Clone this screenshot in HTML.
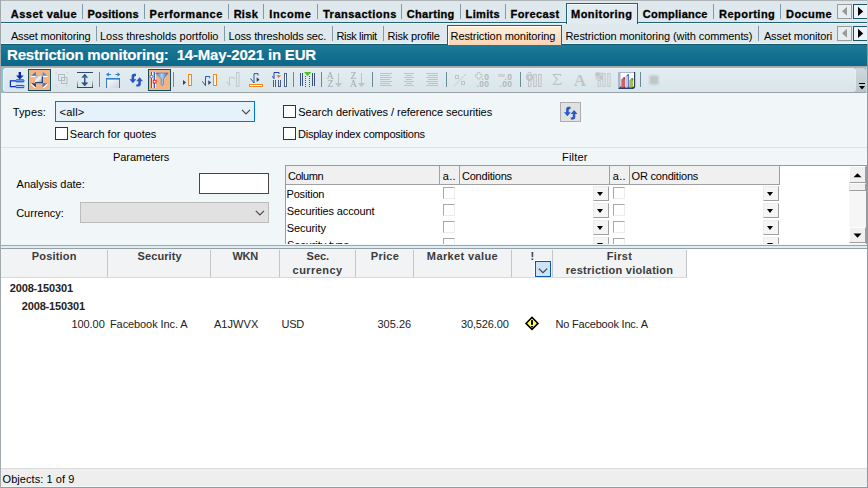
<!DOCTYPE html>
<html><head><meta charset="utf-8"><title>Restriction monitoring</title>
<style>
html,body{margin:0;padding:0;}
body{width:868px;height:488px;overflow:hidden;background:#fff;font-family:"Liberation Sans",sans-serif;}
#app{position:relative;width:868px;height:488px;overflow:hidden;background:#fff;}
#app div,#app span,#app svg{position:absolute;box-sizing:border-box;}
.t{white-space:pre;line-height:1;}
.sep1{width:1px;background:#7f9aa6;top:4px;height:15px;}
.sep2{width:1px;background:#7f9aa6;top:26px;height:15px;}
.cb{width:13px;height:13px;border:1px solid #333;background:#fff;}
.fcb{width:12px;height:12px;border-top:1px solid #a8a8a8;border-left:1px solid #a8a8a8;border-right:1px solid #ececec;border-bottom:1px solid #ececec;background:#fff;}
.dd{width:16px;height:15px;background:#f5f5f5;border-right:1px solid #a0a0a0;border-bottom:1px solid #a0a0a0;border-top:1px solid #ececec;border-left:1px solid #ececec;}
.dd:after{content:"";position:absolute;left:3px;top:5px;border-left:3.5px solid transparent;border-right:3.5px solid transparent;border-top:4px solid #000;}
.gs{width:1px;background:#c3c6c9;top:250px;height:27px;}
.nav{width:15px;height:15px;background:#e6eef2;border:1px solid #9c9c9c;}
.navr{width:16px;background:#eef4f7;border:1px solid #1a5568;}

</style></head>
<body>
<div id="app">
<!-- tab strip backgrounds -->
<div style="left:0;top:0;width:868px;height:44px;background:#dfe9ed"></div>
<div style="left:0;top:22px;width:868px;height:1px;background:#1f6379"></div>
<div style="left:0;top:23px;width:868px;height:1px;background:#f1f6f9"></div>
<!-- title bar -->
<div style="left:0;top:44px;width:868px;height:22px;background:linear-gradient(#217b99,#14708f 50%,#0a6889)"></div>
<div style="left:0;top:44px;width:868px;height:1px;background:#0f5a73"></div>
<!-- active top tab -->
<div style="left:0;top:43px;width:868px;height:1px;background:#f1f6f9"></div>
<div style="left:566px;top:3px;width:72px;height:21px;background:#e2ebf0;border:1px solid #1f6379;border-bottom:none;box-shadow:inset 1px 1px 0 #f4f8fa"></div>
<!-- active sub tab -->
<div style="left:447px;top:25px;width:115px;height:20px;background:linear-gradient(#fdf0dc,#fbd4b2);border:1px solid #1f6379;border-bottom:none;box-shadow:inset 1px 1px 0 #fffaf0"></div>
<!-- top seps -->
<div class="sep1" style="left:82px"></div><div class="sep1" style="left:144px"></div><div class="sep1" style="left:228px"></div>
<div class="sep1" style="left:263px"></div><div class="sep1" style="left:317px"></div><div class="sep1" style="left:401px"></div>
<div class="sep1" style="left:460px"></div><div class="sep1" style="left:505px"></div><div class="sep1" style="left:713px"></div><div class="sep1" style="left:780px"></div>
<div class="sep2" style="left:96px"></div><div class="sep2" style="left:224px"></div><div class="sep2" style="left:332px"></div>
<div class="sep2" style="left:383px"></div><div class="sep2" style="left:758px"></div>
<!-- nav arrows -->
<div class="nav" style="left:837px;top:4px"></div><div class="nav navr" style="left:853px;top:4px"></div>
<div class="nav" style="left:837px;top:26px"></div><div class="nav navr" style="left:853px;top:26px"></div>
<svg style="left:837px;top:4px" width="31" height="15" viewBox="837 4 31 15"><path d="M842 11.300 L847 6.800 L847 15.800Z" fill="#9a9a9a"/><path d="M858 6.800 L863.200 11.400 L858 16Z" fill="#000"/></svg>
<svg style="left:837px;top:26px" width="31" height="15" viewBox="837 4 31 15"><path d="M842 11.300 L847 6.800 L847 15.800Z" fill="#9a9a9a"/><path d="M858 6.800 L863.200 11.400 L858 16Z" fill="#000"/></svg>
<!-- toolbar -->
<div style="left:0;top:66px;width:868px;height:26px;background:#f0f6fa"></div>
<svg style="left:0;top:0" width="868" height="100" viewBox="0 0 868 100">
<defs>
<linearGradient id="gbar" x1="0" y1="0" x2="0" y2="1"><stop offset="0" stop-color="#0f3ccc"/><stop offset=".5" stop-color="#9fd0ff"/><stop offset="1" stop-color="#0f3ccc"/></linearGradient>
<linearGradient id="gsq" x1="0" y1="0" x2="1" y2="1"><stop offset="0" stop-color="#8a93a8"/><stop offset=".5" stop-color="#f2f4f8"/><stop offset="1" stop-color="#9aa3b8"/></linearGradient>
<linearGradient id="gbox" x1="0" y1="0" x2="1" y2="1"><stop offset="0" stop-color="#ffffff"/><stop offset="1" stop-color="#cfd0e2"/></linearGradient>
<linearGradient id="gfun" x1="0" y1="0" x2="1" y2="0"><stop offset="0" stop-color="#3a7ac8"/><stop offset=".5" stop-color="#a8d4f8"/><stop offset="1" stop-color="#2f68b8"/></linearGradient>
<linearGradient id="gfade" x1="0" y1="0" x2="0" y2="1"><stop offset="0" stop-color="#34466b" stop-opacity="0"/><stop offset="1" stop-color="#34466b"/></linearGradient>
<linearGradient id="garr" x1="0" y1="0" x2="0" y2="1"><stop offset="0" stop-color="#2c456f"/><stop offset="1" stop-color="#3f6fa6"/></linearGradient>
<linearGradient id="gtb" x1="0" y1="0" x2="0" y2="1"><stop offset="0" stop-color="#e3edf1"/><stop offset="1" stop-color="#d9e5ea"/></linearGradient>
<linearGradient id="gov" x1="0" y1="0" x2="0" y2="1"><stop offset="0" stop-color="#cdd7dc"/><stop offset="1" stop-color="#bcc7cc"/></linearGradient>
<filter id="blur"><feGaussianBlur stdDeviation="0.9"/></filter>
</defs>
<!-- toolbar background -->
<rect x="0" y="66" width="868" height="1" fill="#a3a8ab"/>
<rect x="1" y="67" width="866" height="26" fill="#8fc0d0"/>
<rect x="5" y="92" width="862" height="1" fill="#9aa2a6"/>
<path d="M3 71 Q3 68 6 68 L852 68 Q856 68 856 70 L856 89 Q856 92 853 92 L5 92 L3 90 Z" fill="#ebf2f6"/>
<path d="M4 72 Q4 69 7 69 L852 69 Q855.500 69 855.500 70 L856 89 Q856 92 853 92 L5 92 L4 90 Z" fill="url(#gtb)"/>
<path d="M856 68 L862 68 Q866 68 866 72 L866 89 Q866 92 863 92 L853 92 Q856 92 856 89Z" fill="url(#gov)"/>
<rect x="866" y="67" width="1" height="26" fill="#c9d6dc"/>
<!-- overflow chevron -->
<rect x="859" y="83" width="6" height="1" fill="#000"/>
<path d="M859 86 L865 86 L862 89.5Z" fill="#000"/>
<!-- separators -->
<g fill="#6d8c9a">
<rect x="99" y="72" width="1" height="15"/><rect x="173" y="72" width="1" height="15"/><rect x="293" y="72" width="1" height="15"/>
<rect x="321" y="72" width="1" height="15"/><rect x="372" y="72" width="1" height="15"/><rect x="446" y="72" width="1" height="15"/>
<rect x="520" y="72" width="1" height="15"/><rect x="640" y="72" width="1" height="15"/>
</g>
<!-- selected buttons -->
<rect x="28.5" y="69.5" width="22" height="21" fill="#f2b486" stroke="#174f5f"/>
<rect x="148.5" y="69.5" width="22" height="21" fill="#f2b486" stroke="#174f5f"/>

<!-- icon1: insert group -->
<g>
<rect x="18.600" y="72" width="2.400" height="4" fill="#0a2aa8"/>
<path d="M16 75.500 L23.600 75.500 L19.800 79.500Z" fill="#0a2aa8"/>
<rect x="15.700" y="79.700" width="8.300" height="2.300" rx=".8" fill="url(#gbar)" stroke="#0f3ccc" stroke-width=".7"/>
<rect x="15.700" y="85.400" width="8.300" height="2.300" rx=".8" fill="url(#gbar)" stroke="#0f3ccc" stroke-width=".7"/>
<path d="M15.700 80.800 L10.400 80.800 L10.400 86.600 L15.700 86.600" fill="none" stroke="#0c2cb8" stroke-width="1.200"/>
</g>
<!-- icon2: expand -->
<g>
<rect x="35.300" y="75.800" width="7.700" height="7.400" fill="#2c4274"/>
<rect x="35" y="75.500" width="6.800" height="6.500" fill="url(#gsq)"/>
<path d="M31 76 L35.800 71.800 L35.800 76Z" fill="#3a78b8"/><rect x="31" y="75.800" width="4.800" height="1.200" fill="#fff"/>
<path d="M47.500 76 L42.700 71.800 L42.700 76Z" fill="#3a9ad8"/><rect x="42.700" y="75.800" width="4.800" height="1.200" fill="#fff"/>
<path d="M31 83.200 L36 83.200 L36 87.800Z" fill="#2c4a84"/><path d="M31 83.200 L36 87.800 L34.800 88.300 L31 84.800Z" fill="#fff"/>
<path d="M47.500 83.200 L42.500 83.200 L42.500 87.800Z" fill="#3a78c8"/><path d="M47.500 83.200 L42.500 87.800 L43.700 88.300 L47.500 84.800Z" fill="#fff"/>
</g>
<!-- icon3: group disabled -->
<g fill="none" stroke="#b4babd" stroke-width="1">
<rect x="58.500" y="74.500" width="6" height="6"/><rect x="61.500" y="77.500" width="5.500" height="6"/>
<path d="M55.500 72 L57 73.500 M66.500 72 L68 73.500 M55.500 85.200 L57 86.700 M66.500 85.200 L68 86.700" stroke="#c8cccf"/>
</g>
<!-- icon4: fit height -->
<g>
<rect x="77" y="72" width="16" height="1" fill="#34466b"/>
<rect x="77" y="87" width="16" height="1" fill="#34466b"/>
<rect x="77" y="80" width="1" height="8" fill="url(#gfade)"/><rect x="92" y="80" width="1" height="8" fill="url(#gfade)"/>
<path d="M84.750 73.800 L88.300 77.800 L81.200 77.800Z" fill="url(#garr)"/>
<rect x="84" y="77.500" width="1.500" height="5.500" fill="#34567f"/>
<path d="M84.750 86.500 L88.300 82.600 L81.200 82.600Z" fill="url(#garr)"/>
</g>
<!-- icon5: fit width -->
<g>
<path d="M106 74.500 L108.800 72.300 L108.800 73.900 L111 73.900 L111 75.100 L108.800 75.100 L108.800 76.700Z" fill="#2f80d8"/>
<path d="M120.300 74.500 L117.500 72.300 L117.500 73.900 L115.300 73.900 L115.300 75.100 L117.500 75.100 L117.500 76.700Z" fill="#2f80d8"/>
<rect x="106.500" y="78.500" width="13" height="9.500" fill="url(#gbox)"/>
<path d="M106.500 88 L106.500 78.500 L119.500 78.500 L119.500 88" fill="none" stroke="#2f7fd0" stroke-width="1"/><rect x="106" y="78" width="14" height="1.600" fill="#2f7fd0"/>
</g>
<!-- icon6: refresh -->
<g fill="#2a55c8">
<path d="M136 73.800 L133.800 73.800 Q131.600 73.800 131.600 76.500 L131.600 79.300 L129.400 79.300 L132.900 83.300 L136.300 79.300 L134.200 79.300 L134.200 77 Q134.200 76 136 76Z"/>
<path d="M136.300 86.600 L138.600 86.600 Q140.800 86.600 140.800 84 L140.800 81.200 L143 81.200 L139.600 77.200 L136.200 81.200 L138.300 81.200 L138.300 83.500 Q138.300 84.500 136.300 84.500Z"/>
</g>
<!-- icon7: filter -->
<g>
<rect x="151" y="72" width="1" height="16" fill="#2f62d6"/><rect x="152" y="72" width="1" height="16" fill="#fff" opacity=".8"/>
<rect x="154" y="72" width="1" height="16" fill="#2f62d6"/><rect x="155" y="72" width="1" height="16" fill="#fff" opacity=".8"/>
<circle cx="151.500" cy="76.600" r="1.400" fill="#fff" stroke="#2f62d6" stroke-width=".9"/>
<rect x="153.200" y="80.200" width="2.800" height="2.800" fill="#fff" stroke="#ee1111" stroke-width=".9"/>
<path d="M155.700 73 L168.200 73 L163.400 78.800 L163.400 84.200 L162.300 85.800 L161.200 84.200 L161.200 78.800Z" fill="url(#gfun)" stroke="#2f70c0" stroke-width=".6"/>
</g>
<!-- icon8 -->
<g>
<path d="M183 80 L186 82.500 L183 85Z" fill="#2c3f6f"/>
<rect x="188.500" y="74.500" width="3" height="11" fill="#f4f6fa" stroke="#f08a1a" stroke-width="1"/>
</g>
<!-- icon9 -->
<g>
<path d="M202.300 81.300 L205.500 85.700 L205.500 76.500 L209.700 76.500 L209.700 78.300" fill="none" stroke="#2a5a9a" stroke-width="1"/>
<path d="M208.300 80.200 L211.200 82.600 L208.300 85Z" fill="#2c3f6f"/>
<rect x="213.500" y="74.500" width="3" height="11" fill="#f4f6fa" stroke="#f08a1a" stroke-width="1"/>
</g>
<!-- icon10 disabled -->
<g fill="none" stroke="#c3c8cb" stroke-width="1">
<path d="M226.400 81.300 L229.500 85.700 L229.500 77.400 L234 77.400 L234 79"/>
<rect x="236.500" y="72.500" width="2.500" height="14"/>
</g>
<!-- icon11 -->
<g>
<path d="M250.600 78.500 L254 83 L254 73.600 L258 73.600 L258 75.500" fill="none" stroke="#2a5a9a" stroke-width="1"/>
<path d="M256.700 77.300 L259.500 79.700 L256.700 82Z" fill="#2c3f6f"/>
<rect x="249.500" y="84.500" width="13" height="2" fill="#fff" stroke="#f08a1a" stroke-width="1"/>
</g>
<!-- icon12 -->
<g>
<path d="M272.300 76.300 L274 78.600 L274 72.500 L279 72.500 L279 74" fill="none" stroke="#1f3fb0" stroke-width="1"/>
<path d="M276.300 75.300 L281 75.300 L278.650 78Z" fill="#e8731a"/>
<g fill="#4a5f8a" shape-rendering="crispEdges"><rect x="273" y="80" width="1" height="7"/><rect x="275" y="80" width="1" height="7"/>
<rect x="278" y="80" width="1" height="7"/><rect x="280" y="80" width="1" height="7"/><rect x="278" y="86" width="3" height="1"/></g>
<rect x="284" y="73" width="3" height="14" fill="#4a5f8a"/><rect x="285" y="74" width="1" height="12" fill="#fff"/>
</g>
<!-- icon13 -->
<g fill="#3a4f7a">
<rect x="300" y="73" width="1" height="13"/><rect x="302" y="73" width="1" height="13"/>
<rect x="312" y="73" width="1" height="13"/><rect x="314" y="73" width="1" height="13"/>
</g>
<g stroke="#3a4f7a" stroke-width="1" stroke-dasharray="1 1"><path d="M305.500 76 L305.500 87 M309.500 76 L309.500 87"/></g>
<path d="M304 72 L311.300 72 L307.650 76.300Z" fill="#4fc31a"/>
</svg>
<svg style="left:0;top:0" width="868" height="100" viewBox="0 0 868 100">
<g fill="#bcc3c7" font-family="Liberation Serif, serif" font-size="9.500" font-weight="normal" text-anchor="middle">
<!-- AZ -->
<text fill="#a3abaf" x="330.300" y="78.800">A</text><text fill="#a3abaf" x="330.500" y="86.700">Z</text>
<rect x="338" y="73" width="1" height="11"/><path d="M335 83 L342 83 L338.500 87.300Z"/>
<text fill="#a3abaf" x="353.500" y="78.800">Z</text><text fill="#a3abaf" x="353.500" y="86.700">A</text>
<rect x="361" y="73" width="1" height="11"/><path d="M358 83 L365 83 L361.500 87.300Z"/>
</g>
<g fill="#bcc3c7">
<!-- align left -->
<rect x="380" y="73" width="12" height="1"/><rect x="380" y="75" width="10" height="1"/><rect x="380" y="77" width="12" height="1"/><rect x="380" y="79" width="10" height="1"/><rect x="380" y="81" width="12" height="1"/><rect x="380" y="83" width="10" height="1"/><rect x="380" y="85" width="12" height="1"/>
<!-- center -->
<rect x="404" y="73" width="10" height="1"/><rect x="406" y="75" width="6" height="1"/><rect x="404" y="77" width="10" height="1"/><rect x="406" y="79" width="6" height="1"/><rect x="404" y="81" width="10" height="1"/><rect x="406" y="83" width="6" height="1"/><rect x="404" y="85" width="10" height="1"/>
<!-- right -->
<rect x="426" y="73" width="12" height="1"/><rect x="428" y="75" width="10" height="1"/><rect x="426" y="77" width="12" height="1"/><rect x="428" y="79" width="10" height="1"/><rect x="426" y="81" width="12" height="1"/><rect x="428" y="83" width="10" height="1"/><rect x="426" y="85" width="12" height="1"/>
</g>
<!-- percent -->
<g fill="none" stroke="#bcc3c7" stroke-width="1">
<path d="M454 85.800 L466 74" stroke-width=".8"/>
<rect x="455.500" y="75.500" width="3" height="3"/><rect x="461.500" y="81.500" width="3" height="3"/>
</g>
<!-- +.0 .00 -->
<g fill="#b0b8bc" font-family="Liberation Sans, sans-serif" font-size="8.500" font-weight="bold">
<path d="M477.500 72.500 h2.500 v2 h2 v2.500 h-2 v2 h-2.500 v-2 h-2 v-2.500 h2z" fill="#e6edf0" stroke="#b4bbbf" stroke-width=".7"/>
<text x="481.500" y="79.800" letter-spacing="0.500">.0</text>
<text x="476.500" y="86.800" letter-spacing="0.300">.00</text>
<rect x="498.500" y="74.500" width="6" height="2" fill="#cdd3d6" stroke="#c2c8cb" stroke-width=".6"/>
<text x="504.500" y="79.800" letter-spacing="0.500">.0</text>
<text x="499.500" y="86.800" letter-spacing="0.300">.00</text>
</g>
<!-- lock columns -->
<g fill="none" stroke="#bcc3c7" stroke-width="1">
<rect x="526.500" y="75" width="6" height="4.500" rx="1" fill="#c2c8cb"/>
<path d="M527.800 75 L527.800 73.800 Q527.800 72.300 529.500 72.300 Q531.200 72.300 531.200 73.800 L531.200 75"/>
<rect x="528.500" y="80.500" width="2.500" height="6"/>
<rect x="533.800" y="74.500" width="2.500" height="12"/>
<rect x="538.600" y="74.500" width="2.500" height="12"/>
</g>
<rect x="529" y="76" width="1.500" height="2.500" fill="#e3ebef"/>
<!-- sigma -->
<path d="M552.500 74 L561 74 L561.300 76.300 L560.600 76.300 Q560.300 74.900 559 74.900 L554.400 74.900 L558 79.300 L554.200 83.800 L559.200 83.800 Q560.500 83.800 560.900 82.300 L561.500 82.300 L561.200 85 L552.500 85 L552.500 84.400 L556.500 79.500 L552.500 74.600Z" fill="#bcc3c7"/>
<!-- A serif -->
<text x="580" y="85.800" fill="#c0c6c9" font-family="Liberation Serif, serif" font-size="17" font-weight="bold" text-anchor="middle">A</text>
<!-- shaded columns -->
<g>
<rect x="595.500" y="72.500" width="7.500" height="7" fill="#cdd2d5"/>
<rect x="595.500" y="72.500" width="4" height="3.500" fill="#c0c6c9"/><rect x="599.500" y="76" width="3.500" height="3.500" fill="#c0c6c9"/>
<g fill="none" stroke="#c3c9cc" stroke-width="1">
<rect x="598" y="80.500" width="2.300" height="6"/><rect x="602.800" y="73.500" width="2.300" height="13"/><rect x="607.800" y="73.500" width="2.300" height="13"/>
</g></g>
<!-- chart -->
<g>
<rect x="620.500" y="72" width="14" height="15.500" fill="#fff"/>
<path d="M618 72 L620.500 72 L620.500 86.500 L618 89Z" fill="#a9b5c9"/>
<rect x="618" y="72" width="17" height="1" fill="#a9b5c9"/><path d="M618 89 L620.500 86.600 L634 86.600 L634 72 L635.200 72 L635.200 87.300 L633.500 89Z" fill="#2a3f70"/>
<path d="M621.300 79.500 L623.300 77.400 L625 77.400 L625 87 L621.300 88Z" fill="#d96060"/><path d="M623.300 77.400 L625 77.400 L625 79 L624 79.500Z" fill="#b02020"/>
<path d="M625.300 76.500 L627.300 74.400 L629 74.400 L629 87 L625.300 88Z" fill="#bccaf0"/><path d="M627.300 74.400 L629 74.400 L629 87 L628.300 87 L628.300 75.500 L626.300 76.500Z" fill="#3a55c8"/>
<path d="M629.300 80.500 L631.300 78.300 L633.200 78.300 L633.200 87 L629.300 88Z" fill="#a3bf44"/><path d="M631.300 78.300 L633.200 78.300 L633.200 80 L632 80.500Z" fill="#6a8a1a"/>
</g>
<!-- blurred square -->
<rect x="649.500" y="75.500" width="9" height="9" fill="#bfc5c8" filter="url(#blur)"/>
</svg>

<!-- panel -->
<div style="left:0;top:93px;width:868px;height:152px;background:#f1f6f9"></div>
<div style="left:1px;top:147px;width:866px;height:1px;background:#dce3e7"></div>
<div style="left:0;top:245px;width:868px;height:1px;background:#9aa6ab"></div>
<div style="left:0;top:246px;width:868px;height:2px;background:#dfeef5"></div>
<div style="left:0;top:248px;width:868px;height:1px;background:#94a0a5"></div>
<!-- combos -->
<div style="left:55px;top:101px;width:200px;height:21px;background:#e5f1fb;border:1px solid #0078d7"></div>
<svg style="left:241px;top:108px" width="11" height="8"><path d="M1 1.800 L5 5.800 L9 1.800" fill="none" stroke="#484848" stroke-width="1.200"/></svg>
<div class="cb" style="left:55px;top:127px"></div>
<div class="cb" style="left:283px;top:105px"></div>
<div class="cb" style="left:283px;top:127px"></div>
<div style="left:199px;top:173px;width:70px;height:21px;background:#fff;border:1px solid #484848"></div>
<div style="left:80px;top:202px;width:189px;height:21px;background:#e1e1e1;border:1px solid #bcbcbc"></div>
<svg style="left:254px;top:209px" width="11" height="8"><path d="M1.800 1.800 L5.900 5.900 L10 1.800" fill="none" stroke="#484848" stroke-width="1.200"/></svg>
<!-- refresh button -->
<div style="left:560px;top:102px;width:21px;height:20px;background:#e1e1e1;border:1px solid #adadad"></div>
<svg style="left:560px;top:102px" width="21" height="20" viewBox="560 102 21 20"><g fill="#2a5ac8" transform="translate(434.500,32.900)">
<path d="M136 73.800 L133.800 73.800 Q131.600 73.800 131.600 76.500 L131.600 79.300 L129.400 79.300 L132.900 83.300 L136.300 79.300 L134.200 79.300 L134.200 77 Q134.200 76 136 76Z"/>
<path d="M136.300 86.600 L138.600 86.600 Q140.800 86.600 140.800 84 L140.800 81.200 L143 81.200 L139.600 77.200 L136.200 81.200 L138.300 81.200 L138.300 83.500 Q138.300 84.500 136.300 84.500Z"/>
</g></svg>
<!-- filter table -->
<div style="left:285px;top:165px;width:582px;height:79px;background:#fff;border:1px solid #9a9a9a;border-bottom:none"></div>
<div style="left:286px;top:166px;width:494px;height:19px;background:#f0f0f0;border-bottom:1px solid #a0a0a0;border-right:1px solid #a0a0a0"></div>
<div style="left:439px;top:166px;width:1px;height:18px;background:#a0a0a0"></div>
<div style="left:459px;top:166px;width:1px;height:18px;background:#a0a0a0"></div>
<div style="left:609px;top:166px;width:1px;height:18px;background:#a0a0a0"></div>
<div style="left:629px;top:166px;width:1px;height:18px;background:#a0a0a0"></div>
<div id="frows" style="left:0;top:185px;width:849px;height:59px;overflow:hidden"><div style="left:0;top:-185px;width:849px;height:300px">
<div class="fcb" style="left:443px;top:187px"></div><div class="fcb" style="left:613px;top:187px"></div><div class="dd" style="left:593px;top:186px"></div><div class="dd" style="left:763px;top:186px"></div>
<div class="fcb" style="left:443px;top:204px"></div><div class="fcb" style="left:613px;top:204px"></div><div class="dd" style="left:593px;top:203px"></div><div class="dd" style="left:763px;top:203px"></div>
<div class="fcb" style="left:443px;top:221px"></div><div class="fcb" style="left:613px;top:221px"></div><div class="dd" style="left:593px;top:220px"></div><div class="dd" style="left:763px;top:220px"></div>
<div class="fcb" style="left:443px;top:238px"></div><div class="fcb" style="left:613px;top:238px"></div><div class="dd" style="left:593px;top:237px"></div><div class="dd" style="left:763px;top:237px"></div>
<span class="t" style="left:287.1px;top:239.69px;font-size:11px;letter-spacing:-0.1px">Security type</span>
</div></div>
<!-- scrollbar -->
<div style="left:849px;top:166px;width:17px;height:78px;background:#f6f6f6"></div>
<div style="left:849px;top:166px;width:17px;height:17px;background:#f0f0f0;border-right:1px solid #a0a0a0;border-bottom:1px solid #a0a0a0;border-top:1px solid #fff;border-left:1px solid #fff"></div>
<div style="left:849px;top:183px;width:17px;height:8px;background:#f0f0f0;border-right:1px solid #a0a0a0;border-bottom:1px solid #a0a0a0;border-top:1px solid #fff;border-left:1px solid #e3e3e3"></div>
<div style="left:849px;top:227px;width:17px;height:16px;background:#f0f0f0;border-right:1px solid #a0a0a0;border-bottom:1px solid #a0a0a0;border-top:1px solid #fff;border-left:1px solid #fff"></div>
<svg style="left:849px;top:166px" width="17" height="78"><path d="M4.500 11.300 L12.500 11.300 L8.500 7.300Z" fill="#000"/><path d="M4.500 67.500 L12.500 67.500 L8.500 71.700Z" fill="#000"/></svg>
<!-- grid -->
<div style="left:0;top:249px;width:868px;height:220px;background:#fff"></div>
<div style="left:1px;top:249px;width:686px;height:29px;background:#f1f3f5;border-bottom:1px solid #d6dadd"></div>
<div class="gs" style="left:107px"></div><div class="gs" style="left:210px"></div><div class="gs" style="left:279px"></div>
<div class="gs" style="left:355px"></div><div class="gs" style="left:413px"></div><div class="gs" style="left:511px"></div><div class="gs" style="left:552px"></div><div class="gs" style="left:686px"></div>
<div style="left:534px;top:260px;width:17px;height:17px;background:#fff"></div>
<div style="left:535px;top:261px;width:16px;height:16px;background:#cce4f7;border:1px solid #0a58a6"></div>
<svg style="left:535px;top:261px" width="16" height="16"><path d="M3.800 7.600 L8 11.600 L12.200 7.600" fill="none" stroke="#444" stroke-width="1.200"/></svg>
<!-- warning -->
<svg style="left:522px;top:314px" width="20" height="20"><path d="M10 3.400 L16 9.400 L10 15.400 L4 9.400Z" fill="#ffff55" stroke="#000" stroke-width="1.500" stroke-linejoin="miter"/><rect x="9" y="6" width="2" height="5" rx=".8" fill="#000"/><rect x="9" y="12" width="2" height="1.400" fill="#000"/></svg>
<!-- status -->
<div style="left:0;top:468px;width:868px;height:18px;background:#eeeeee;border-top:1px solid #dadada"></div>
<div style="left:0;top:486px;width:868px;height:1px;background:#f5f8f9"></div>
<div style="left:0;top:487px;width:868px;height:1px;background:#929da2"></div>
<!-- borders -->
<div style="left:0;top:0;width:868px;height:1px;background:#aeb4b7"></div>
<div style="left:0;top:0;width:1px;height:488px;background:#a2a9ad"></div>
<div style="left:867px;top:44px;width:1px;height:444px;background:#8e9a9f"></div>
<div style="left:867px;top:0px;width:1px;height:44px;background:#c8d6dc"></div>

<span class='t ' style='left:10.86px;top:8.69px;font-size:11px;font-weight:bold;color:#000;letter-spacing:0.464px;-webkit-text-stroke:0.3px #000'>Asset value</span>
<span class='t ' style='left:87.57px;top:8.69px;font-size:11px;font-weight:bold;color:#000;letter-spacing:0.181px;-webkit-text-stroke:0.3px #000'>Positions</span>
<span class='t ' style='left:149.57px;top:8.69px;font-size:11px;font-weight:bold;color:#000;letter-spacing:0.558px;-webkit-text-stroke:0.3px #000'>Performance</span>
<span class='t ' style='left:233.63px;top:8.69px;font-size:11px;font-weight:bold;color:#000;letter-spacing:0.300px;-webkit-text-stroke:0.3px #000'>Risk</span>
<span class='t ' style='left:269.29px;top:8.69px;font-size:11px;font-weight:bold;color:#000;letter-spacing:0.600px;-webkit-text-stroke:0.3px #000'>Income</span>
<span class='t ' style='left:323.00px;top:8.69px;font-size:11px;font-weight:bold;color:#000;letter-spacing:0.500px;-webkit-text-stroke:0.3px #000'>Transactions</span>
<span class='t ' style='left:406.81px;top:8.69px;font-size:11px;font-weight:bold;color:#000;letter-spacing:0.331px;-webkit-text-stroke:0.3px #000'>Charting</span>
<span class='t ' style='left:465.57px;top:8.69px;font-size:11px;font-weight:bold;color:#000;letter-spacing:0.353px;-webkit-text-stroke:0.3px #000'>Limits</span>
<span class='t ' style='left:510.57px;top:8.69px;font-size:11px;font-weight:bold;color:#000;letter-spacing:0.401px;-webkit-text-stroke:0.3px #000'>Forecast</span>
<span class='t ' style='left:571.07px;top:8.69px;font-size:11px;font-weight:bold;color:#000;letter-spacing:0.449px;-webkit-text-stroke:0.3px #000'>Monitoring</span>
<span class='t ' style='left:642.81px;top:8.69px;font-size:11px;font-weight:bold;color:#000;letter-spacing:0.259px;-webkit-text-stroke:0.3px #000'>Compliance</span>
<span class='t ' style='left:719.07px;top:8.69px;font-size:11px;font-weight:bold;color:#000;letter-spacing:0.474px;-webkit-text-stroke:0.3px #000'>Reporting</span>
<span class='t ' style='left:786.07px;top:8.69px;font-size:11px;font-weight:bold;color:#000;letter-spacing:0.415px;-webkit-text-stroke:0.3px #000'>Docume</span>
<span class='t ' style='left:10.88px;top:30.69px;font-size:11px;font-weight:normal;color:#000;letter-spacing:-0.146px'>Asset monitoring</span>
<span class='t ' style='left:100.00px;top:30.69px;font-size:11px;font-weight:normal;color:#000;letter-spacing:-0.033px'>Loss thresholds portfolio</span>
<span class='t ' style='left:228.50px;top:30.69px;font-size:11px;font-weight:normal;color:#000;letter-spacing:-0.132px'>Loss thresholds sec.</span>
<span class='t ' style='left:336.50px;top:30.69px;font-size:11px;font-weight:normal;color:#000;letter-spacing:-0.374px'>Risk limit</span>
<span class='t ' style='left:387.50px;top:30.69px;font-size:11px;font-weight:normal;color:#000;letter-spacing:-0.180px'>Risk profile</span>
<span class='t ' style='left:450.50px;top:30.69px;font-size:11px;font-weight:normal;color:#000;letter-spacing:-0.067px'>Restriction monitoring</span>
<span class='t ' style='left:565.50px;top:30.69px;font-size:11px;font-weight:normal;color:#000;letter-spacing:-0.086px'>Restriction monitoring (with comments)</span>
<span class='t ' style='left:763.88px;top:30.69px;font-size:11px;font-weight:normal;color:#000;letter-spacing:-0.098px'>Asset monitori</span>
<span class='t ' style='left:7.00px;top:47.30px;font-size:15px;font-weight:bold;color:#fff;letter-spacing:-0.180px;-webkit-text-stroke:0.15px #fff'>Restriction monitoring:  14-May-2021 in EUR</span>
<span class='t ' style='left:12.66px;top:106.69px;font-size:11px;font-weight:normal;color:#000;letter-spacing:0.170px'>Types:</span>
<span class='t ' style='left:59.55px;top:106.69px;font-size:11px;font-weight:normal;color:#000;letter-spacing:0.209px'>&lt;all&gt;</span>
<span class='t ' style='left:69.84px;top:128.69px;font-size:11px;font-weight:normal;color:#000;letter-spacing:-0.021px'>Search for quotes</span>
<span class='t ' style='left:298.34px;top:106.69px;font-size:11px;font-weight:normal;color:#000;letter-spacing:-0.046px'>Search derivatives / reference securities</span>
<span class='t ' style='left:298.00px;top:128.69px;font-size:11px;font-weight:normal;color:#000;letter-spacing:-0.222px'>Display index compositions</span>
<span class='t ' style='left:113.00px;top:151.69px;font-size:11px;font-weight:normal;color:#000;letter-spacing:-0.057px'>Parameters</span>
<span class='t ' style='left:562.00px;top:151.69px;font-size:11px;font-weight:normal;color:#000;letter-spacing:0.186px'>Filter</span>
<span class='t ' style='left:16.58px;top:178.69px;font-size:11px;font-weight:normal;color:#000;letter-spacing:-0.028px'>Analysis date:</span>
<span class='t ' style='left:16.18px;top:207.69px;font-size:11px;font-weight:normal;color:#000;letter-spacing:0.006px'>Currency:</span>
<span class='t ' style='left:287.98px;top:170.69px;font-size:11px;font-weight:normal;color:#000;letter-spacing:-0.467px'>Column</span>
<span class='t ' style='left:442.73px;top:170.69px;font-size:11px;font-weight:normal;color:#000;letter-spacing:0.300px'>a..</span>
<span class='t ' style='left:461.98px;top:170.69px;font-size:11px;font-weight:normal;color:#000;letter-spacing:-0.208px'>Conditions</span>
<span class='t ' style='left:612.73px;top:170.69px;font-size:11px;font-weight:normal;color:#000;letter-spacing:0.300px'>a..</span>
<span class='t ' style='left:631.55px;top:170.69px;font-size:11px;font-weight:normal;color:#000;letter-spacing:-0.192px'>OR conditions</span>
<span class='t ' style='left:286.50px;top:188.69px;font-size:11px;font-weight:normal;color:#000;letter-spacing:-0.165px'>Position</span>
<span class='t ' style='left:286.84px;top:205.69px;font-size:11px;font-weight:normal;color:#000;letter-spacing:-0.128px'>Securities account</span>
<span class='t ' style='left:286.84px;top:222.69px;font-size:11px;font-weight:normal;color:#000;letter-spacing:-0.094px'>Security</span>
<span class='t ' style='left:31.85px;top:250.69px;font-size:11px;font-weight:bold;color:#3c3c3c;letter-spacing:0.165px'>Position</span>
<span class='t ' style='left:137.61px;top:250.69px;font-size:11px;font-weight:bold;color:#3c3c3c;letter-spacing:0.078px'>Security</span>
<span class='t ' style='left:232.45px;top:250.69px;font-size:11px;font-weight:bold;color:#3c3c3c;letter-spacing:-0.300px'>WKN</span>
<span class='t ' style='left:306.61px;top:250.69px;font-size:11px;font-weight:bold;color:#3c3c3c;letter-spacing:-0.037px'>Sec.</span>
<span class='t ' style='left:292.61px;top:264.69px;font-size:11px;font-weight:bold;color:#3c3c3c;letter-spacing:0.429px'>currency</span>
<span class='t ' style='left:370.85px;top:250.69px;font-size:11px;font-weight:bold;color:#3c3c3c;letter-spacing:0.250px'>Price</span>
<span class='t ' style='left:426.85px;top:250.69px;font-size:11px;font-weight:bold;color:#3c3c3c;letter-spacing:0.384px'>Market value</span>
<span class='t ' style='left:530.57px;top:250.69px;font-size:11px;font-weight:bold;color:#3c3c3c;letter-spacing:0.000px'>!</span>
<span class='t ' style='left:606.85px;top:250.69px;font-size:11px;font-weight:bold;color:#3c3c3c;letter-spacing:0.291px'>First</span>
<span class='t ' style='left:565.83px;top:264.69px;font-size:11px;font-weight:bold;color:#3c3c3c;letter-spacing:0.258px'>restriction violation</span>
<span class='t ' style='left:9.76px;top:282.69px;font-size:11px;font-weight:bold;color:#222;letter-spacing:-0.159px'>2008-150301</span>
<span class='t ' style='left:21.76px;top:300.69px;font-size:11px;font-weight:bold;color:#222;letter-spacing:-0.159px'>2008-150301</span>
<span class='t ' style='left:71.43px;top:318.69px;font-size:11px;font-weight:normal;color:#222;letter-spacing:-0.058px'>100.00</span>
<span class='t ' style='left:110.00px;top:318.69px;font-size:11px;font-weight:normal;color:#222;letter-spacing:-0.096px'>Facebook Inc. A</span>
<span class='t ' style='left:213.88px;top:318.69px;font-size:11px;font-weight:normal;color:#222;letter-spacing:0.078px'>A1JWVX</span>
<span class='t ' style='left:281.60px;top:318.69px;font-size:11px;font-weight:normal;color:#222;letter-spacing:-0.300px'>USD</span>
<span class='t ' style='left:377.44px;top:318.69px;font-size:11px;font-weight:normal;color:#222;letter-spacing:0.015px'>305.26</span>
<span class='t ' style='left:460.94px;top:318.69px;font-size:11px;font-weight:normal;color:#222;letter-spacing:-0.130px'>30,526.00</span>
<span class='t ' style='left:555.50px;top:318.69px;font-size:11px;font-weight:normal;color:#222;letter-spacing:-0.203px'>No Facebook Inc. A</span>
<span class='t ' style='left:2.55px;top:473.69px;font-size:11px;font-weight:normal;color:#000;letter-spacing:0.067px'>Objects: 1 of 9</span>
</div>
</body></html>
